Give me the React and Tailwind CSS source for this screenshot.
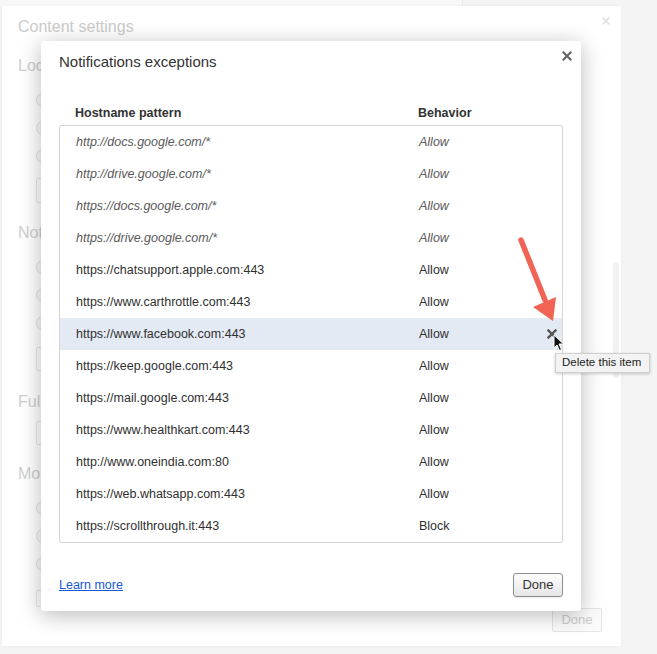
import { X } from 'lucide-react';

const exceptions = [
  { host: 'http://docs.google.com/*', behavior: 'Allow', policy: true },
  { host: 'http://drive.google.com/*', behavior: 'Allow', policy: true },
  { host: 'https://docs.google.com/*', behavior: 'Allow', policy: true },
  { host: 'https://drive.google.com/*', behavior: 'Allow', policy: true },
  { host: 'https://chatsupport.apple.com:443', behavior: 'Allow' },
  { host: 'https://www.carthrottle.com:443', behavior: 'Allow' },
  { host: 'https://www.facebook.com:443', behavior: 'Allow', selected: true },
  { host: 'https://keep.google.com:443', behavior: 'Allow' },
  { host: 'https://mail.google.com:443', behavior: 'Allow' },
  { host: 'https://www.healthkart.com:443', behavior: 'Allow' },
  { host: 'http://www.oneindia.com:80', behavior: 'Allow' },
  { host: 'https://web.whatsapp.com:443', behavior: 'Allow' },
  { host: 'https://scrollthrough.it:443', behavior: 'Block' }
];

function Radio() {
  return (
    <div className="h-[28px] flex items-center">
      <span className="w-[14px] h-[14px] rounded-full border border-[#e2e2e2] bg-[#fafafa]"></span>
    </div>
  );
}

// only the first letters peek out from under the dialog
function Section({ title, radios }) {
  return (
    <>
      <div className="h-[20px] whitespace-nowrap text-[16px] leading-[20px] text-[#cfcfcf]">{title}</div>
      {radios && (
        <div className="mt-[10px] pl-[18px]">
          <Radio />
          <Radio />
          <Radio />
        </div>
      )}
    </>
  );
}

function DeleteCursor() {
  return (
    <svg width="12" height="18" viewBox="0 0 12 18" className="absolute left-[553px] top-[334px]">
      <path d="M1 1 L1 14 L4 11 L6.5 16.5 L8.5 15.5 L6 10 L10.5 10 Z" fill="#111" stroke="#fff" strokeWidth="1" strokeLinejoin="round" />
    </svg>
  );
}

function RedArrow() {
  return (
    <svg width="60" height="100" viewBox="0 0 60 100" className="absolute left-[510px] top-[230px]">
      <line x1="11" y1="10" x2="35" y2="70" stroke="#f16354" strokeWidth="5.5" strokeLinecap="round" />
      <polygon points="23,77 46,67 43,91" fill="#f16354" />
    </svg>
  );
}

export default function App() {
  return (
    <div className="relative w-[657px] h-[654px] overflow-hidden bg-[#f4f4f4] font-['Liberation_Sans',Arial,sans-serif]">
      <div className="h-[6px] w-[463px] bg-[#f7f7f7] border-r border-[#ececec]"></div>

      {/* background page, dimmed */}
      <div className="relative ml-[2px] w-[619px] h-[640px] bg-white shadow-[0_0_2px_rgba(0,0,0,0.06)] pl-[16px] pr-[19px] pt-[11px]">
        <X className="absolute right-[9px] top-[9px] text-[#dcdcdc]" size={12} strokeWidth={3} />
        <div className="h-[20px] text-[16px] leading-[20px] text-[#cbcbcb]">Content settings</div>

        <div className="mt-[19px]"><Section title="Loc" radios /></div>
        <div className="mt-[8px] ml-[18px] w-[200px] h-[25px] border border-[#e6e6e6] rounded-[2px]"></div>

        <div className="mt-[20px]"><Section title="Not" radios /></div>
        <div className="mt-[10px] ml-[18px] w-[200px] h-[24px] border border-[#e6e6e6] rounded-[2px]"></div>

        <div className="mt-[21px]"><Section title="Full" /></div>
        <div className="mt-[9px] ml-[18px] w-[200px] h-[24px] border border-[#e6e6e6] rounded-[2px]"></div>

        <div className="mt-[19px]"><Section title="Mo" radios /></div>
        <div className="flex justify-between items-start">
          <div className="mt-[12px] ml-[18px] w-[200px] h-[17px] border border-[#e6e6e6] rounded-[2px]"></div>
          <button className="mt-[30px] w-[50px] h-[24px] border border-[#e4e4e4] rounded-[2px] bg-[#fbfbfb] text-[13px] text-[#cdcdcd]">
            Done
          </button>
        </div>

        <div className="absolute right-[2px] top-[256px] w-[6px] h-[116px] rounded-full bg-[#f2f2f2]"></div>
      </div>

      {/* modal dialog */}
      <div className="absolute left-[41px] top-[41px] w-[540px] h-[570px] bg-white rounded-[3px] shadow-[0_4px_22px_rgba(0,0,0,0.28)] px-[18px] flex flex-col">
        <div className="flex items-start justify-between">
          <h1 className="mt-[11px] text-[15px] leading-[20px] text-[#333]">Notifications exceptions</h1>
          <svg width="10" height="10" viewBox="0 0 10 10" className="mt-[10px] mr-[-9px]">
            <path d="M1.5 1.5 L8.5 8.5 M8.5 1.5 L1.5 8.5" stroke="#666" strokeWidth="2.2" strokeLinecap="square" />
          </svg>
        </div>

        <div className="mt-[31px] flex h-[21px] items-center pl-[16px] text-[12.5px] font-bold text-[#333]">
          <div className="w-[343px]">Hostname pattern</div>
          <div>Behavior</div>
        </div>

        <div className="mt-[1px] border border-[#d6d6d6] rounded-[2px] flex flex-col">
          {exceptions.map((row) => (
            <div
              key={row.host}
              className={`flex items-center h-[32px] pl-[16px] text-[12.5px] ${row.selected ? 'bg-[#e4eaf4]' : ''} ${row.policy ? 'italic text-[#5a5a5a]' : 'text-[#303030]'}`}
            >
              <div className="w-[343px]">{row.host}</div>
              <div className="flex-1">{row.behavior}</div>
              {row.selected && (
                <svg width="10" height="10" viewBox="0 0 10 10" className="mr-[5px]">
                  <path d="M1.5 1.5 L8.5 8.5 M8.5 1.5 L1.5 8.5" stroke="#555" strokeWidth="2.4" strokeLinecap="square" />
                </svg>
              )}
            </div>
          ))}
        </div>

        <div className="mt-[30px] flex items-center justify-between">
          <a href="#" className="text-[12.5px] text-[#1558d6] underline">Learn more</a>
          <button className="w-[50px] h-[24px] border border-[#8e8e8e] rounded-[3px] bg-gradient-to-b from-[#fdfdfd] to-[#e6e6e6] text-[13px] text-[#333] shadow-[0_1px_1px_rgba(0,0,0,0.08)]">
            Done
          </button>
        </div>
      </div>

      <RedArrow />
      <DeleteCursor />

      <div className="absolute left-[555px] top-[353px] h-[20px] w-[95px] px-[6px] flex items-center bg-[#f3f3f3] border border-[#cfcfcf] shadow-[0_1px_3px_rgba(0,0,0,0.2)] text-[11.5px] text-[#222]">
        Delete this item
      </div>
    </div>
  );
}
